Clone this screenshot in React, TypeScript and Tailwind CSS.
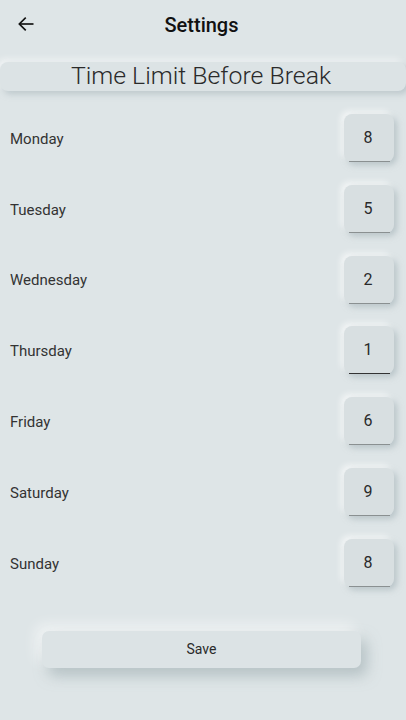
import React from "react";

const days: [string, string, boolean][] = [
  ["Monday", "8", false],
  ["Tuesday", "5", false],
  ["Wednesday", "2", false],
  ["Thursday", "1", true],
  ["Friday", "6", false],
  ["Saturday", "9", false],
  ["Sunday", "8", false],
];

export default function App() {
  return (
    <div
      className="w-[406px] h-[720px] bg-[#dee5e7] flex flex-col text-[#1f1f1f]"
      style={{ fontFamily: "Roboto, 'Liberation Sans', sans-serif" }}
    >
      <div className="h-[48px] flex items-center relative">
        <div className="absolute left-[16px] top-[14px]">
          <svg width="20" height="20" viewBox="0 0 24 24" fill="none" stroke="#111" strokeWidth="2" strokeLinecap="square">
            <path d="M20 12H5" />
            <path d="M11 5l-7 7 7 7" />
          </svg>
        </div>
        <div className="flex-1 text-center text-[20px] font-medium text-[#111] pt-[1px] pr-[3px]">Settings</div>
      </div>
      <div className="mt-[14px] h-[29px] rounded-[8px] bg-[#dce3e5] shadow-[3px_3px_6px_rgba(160,175,180,0.55),-3px_-3px_6px_rgba(255,255,255,0.6)] flex items-center justify-center pr-[4px]">
        <span className="text-[24.8px] font-light text-[#2a2a2a] leading-none">Time Limit Before Break</span>
      </div>
      <div className="flex flex-col gap-[22.8px] mt-[23px]">
        {days.map(([d, v, focus]) => (
          <div key={d} className="flex items-center justify-between pl-[10px] pr-[12px] h-[48px]">
            <span className="text-[15px] text-[#333] pt-[2px]">{d}</span>
            <div className="relative w-[50px] h-[48px] rounded-[8px] bg-[#d8dfe1] shadow-[3px_3px_6px_rgba(160,175,180,0.6),-3px_-3px_6px_rgba(255,255,255,0.7)] flex items-center justify-center">
              <span className="text-[16px] text-[#2a2a2a] pr-[2px]">{v}</span>
              <div
                className={
                  focus
                    ? "absolute left-[5px] right-[4px] bottom-0 h-[1.5px] bg-[#333]"
                    : "absolute left-[5px] right-[4px] bottom-0 h-[1px] bg-[#8a9091]"
                }
              />
            </div>
          </div>
        ))}
      </div>
      <div className="mt-[44px] flex">
        <div className="ml-[42px] w-[319px] h-[37px] rounded-[7px] bg-[#dce3e5] shadow-[6px_8px_14px_rgba(150,165,170,0.55),-6px_-6px_14px_rgba(255,255,255,0.6)] flex items-center justify-center text-[14px] text-[#2a2a2a]">
          Save
        </div>
      </div>
    </div>
  );
}
